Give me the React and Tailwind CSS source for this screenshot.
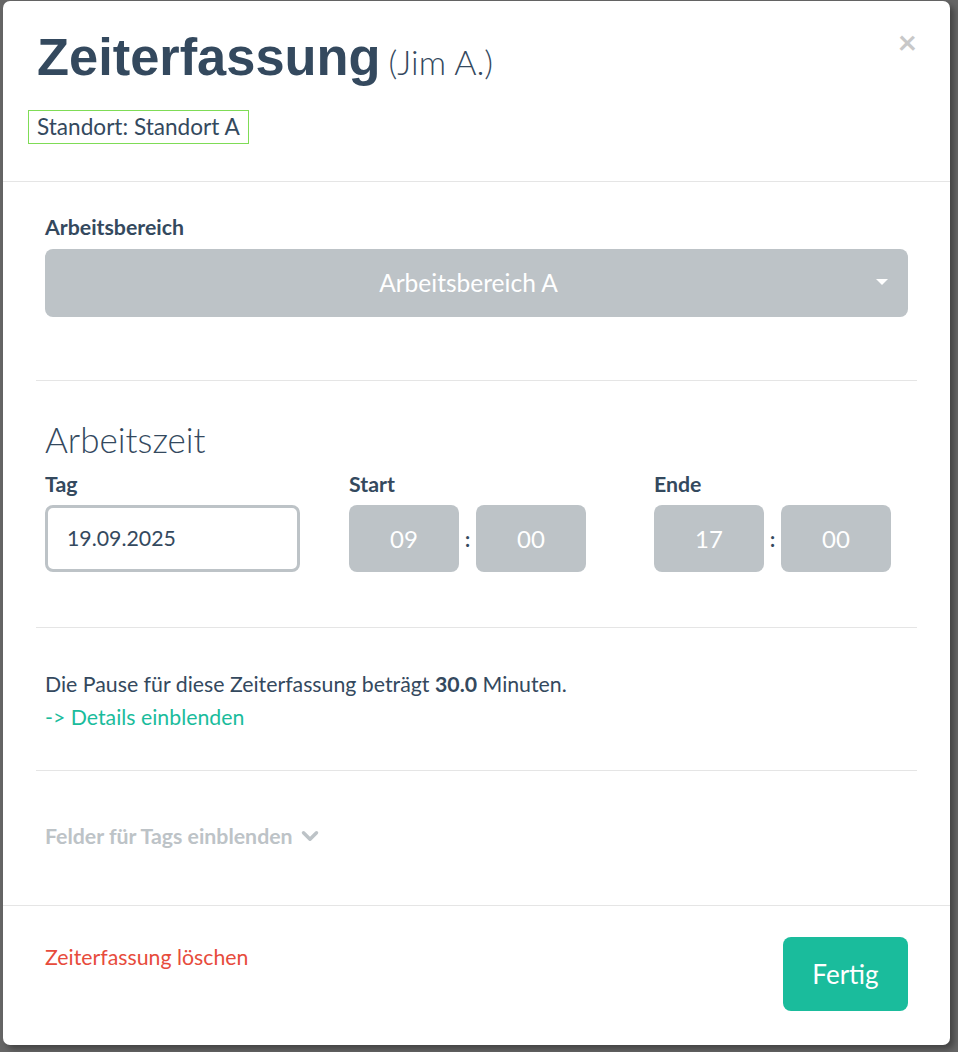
import { ChevronDown } from "lucide-react";

const TimeBox = ({ value }) => (
  <div className="w-[110px] h-[67px] rounded-[8px] bg-[#bdc3c7] flex items-center justify-center text-white text-[24px]">
    {value}
  </div>
);

const TimeField = ({ label, hours, minutes }) => (
  <div className="w-[305px] shrink-0 flex flex-col">
    <div className="font-bold text-[21.3px] leading-[30px] mb-[6px]">{label}</div>
    <div className="flex items-center">
      <TimeBox value={hours} />
      <div className="w-[17px] text-center text-[20px] font-bold">:</div>
      <TimeBox value={minutes} />
    </div>
  </div>
);

const App = () => {
  return (
    <div className="min-h-screen bg-[#666666] pl-[3px] pt-[1px] font-['Lato',sans-serif] text-[#34495e]">
      <div className="w-[947px] h-[1044px] bg-white rounded-[7px] shadow-[4px_4px_6px_rgba(0,0,0,0.35)] flex flex-col">
        {/* header */}
        <div className="relative px-[25px] pt-[26px] pb-[37px] border-b border-[#e5e5e5]">
          <div className="flex items-baseline pl-[9px] h-[60px]">
            <h1 className="font-['Liberation_Sans',sans-serif] font-bold text-[52.4px] leading-[60px]">
              Zeiterfassung
            </h1>
            <span className="ml-[8px] text-[34px] font-light">(Jim A.)</span>
          </div>
          <div className="mt-[23px] inline-block border border-[#7fdc56] px-[8px] py-[4px] text-[22.6px] leading-[24px]">
            Standort: Standort A
          </div>
          <button className="absolute right-[33px] top-[24px] text-[#c8c8c8] text-[33px] font-bold leading-none">
            ×
          </button>
        </div>

        {/* body */}
        <div className="flex-1 px-[33px]">
          <div className="px-[9px] pt-[30px] pb-[63px] border-b border-[#e5e5e5]">
            <div className="font-bold text-[21.3px] leading-[30px] mb-[7px]">Arbeitsbereich</div>
            <div className="relative h-[68px] rounded-[8px] bg-[#bdc3c7] flex items-center justify-center pr-[16px] text-white text-[24.5px]">
              Arbeitsbereich A
              <span className="absolute right-[20px] top-[30px] w-0 h-0 border-l-[6px] border-r-[6px] border-t-[6px] border-l-transparent border-r-transparent border-t-white" />
            </div>
          </div>

          <div className="px-[9px] pt-[38px] pb-[55px] border-b border-[#e5e5e5]">
            <h2 className="text-[35px] font-light leading-[40px] mb-[10px]">Arbeitszeit</h2>
            <div className="flex">
              <div className="w-[304px] shrink-0 flex flex-col">
                <div className="font-bold text-[21.3px] leading-[30px] mb-[6px]">Tag</div>
                <div className="w-[255px] h-[67px] rounded-[8px] border-[3px] border-[#bdc3c7] flex items-center pl-[19px] text-[21.3px]">
                  19.09.2025
                </div>
              </div>
              <TimeField label="Start" hours="09" minutes="00" />
              <TimeField label="Ende" hours="17" minutes="00" />
            </div>
          </div>

          <div className="px-[9px] pt-[40px] pb-[36px] border-b border-[#e5e5e5] text-[21.3px] leading-[33px]">
            <p>
              Die Pause für diese Zeiterfassung beträgt <b>30.0</b> Minuten.
            </p>
            <a className="text-[#1abc9c]">-&gt; Details einblenden</a>
          </div>

          <div className="px-[9px] pt-[50px] pb-[48px]">
            <div className="flex items-center gap-[4px] font-bold text-[21.3px] leading-[30px] text-[#bdc3c7]">
              Felder für Tags einblenden
              <ChevronDown size={26} strokeWidth={3.2} />
            </div>
          </div>
        </div>

        {/* footer */}
        <div className="border-t border-[#e5e5e5] pl-[42px] pr-[42px] pt-[31px] pb-[34px] flex items-center justify-between">
          <a className="text-[#e74c3c] text-[21.3px] -mt-[32px]">Zeiterfassung löschen</a>
          <button className="w-[125px] h-[74px] rounded-[8px] bg-[#1abc9c] text-white text-[26px]">
            Fertig
          </button>
        </div>
      </div>
    </div>
  );
};

export default App;
